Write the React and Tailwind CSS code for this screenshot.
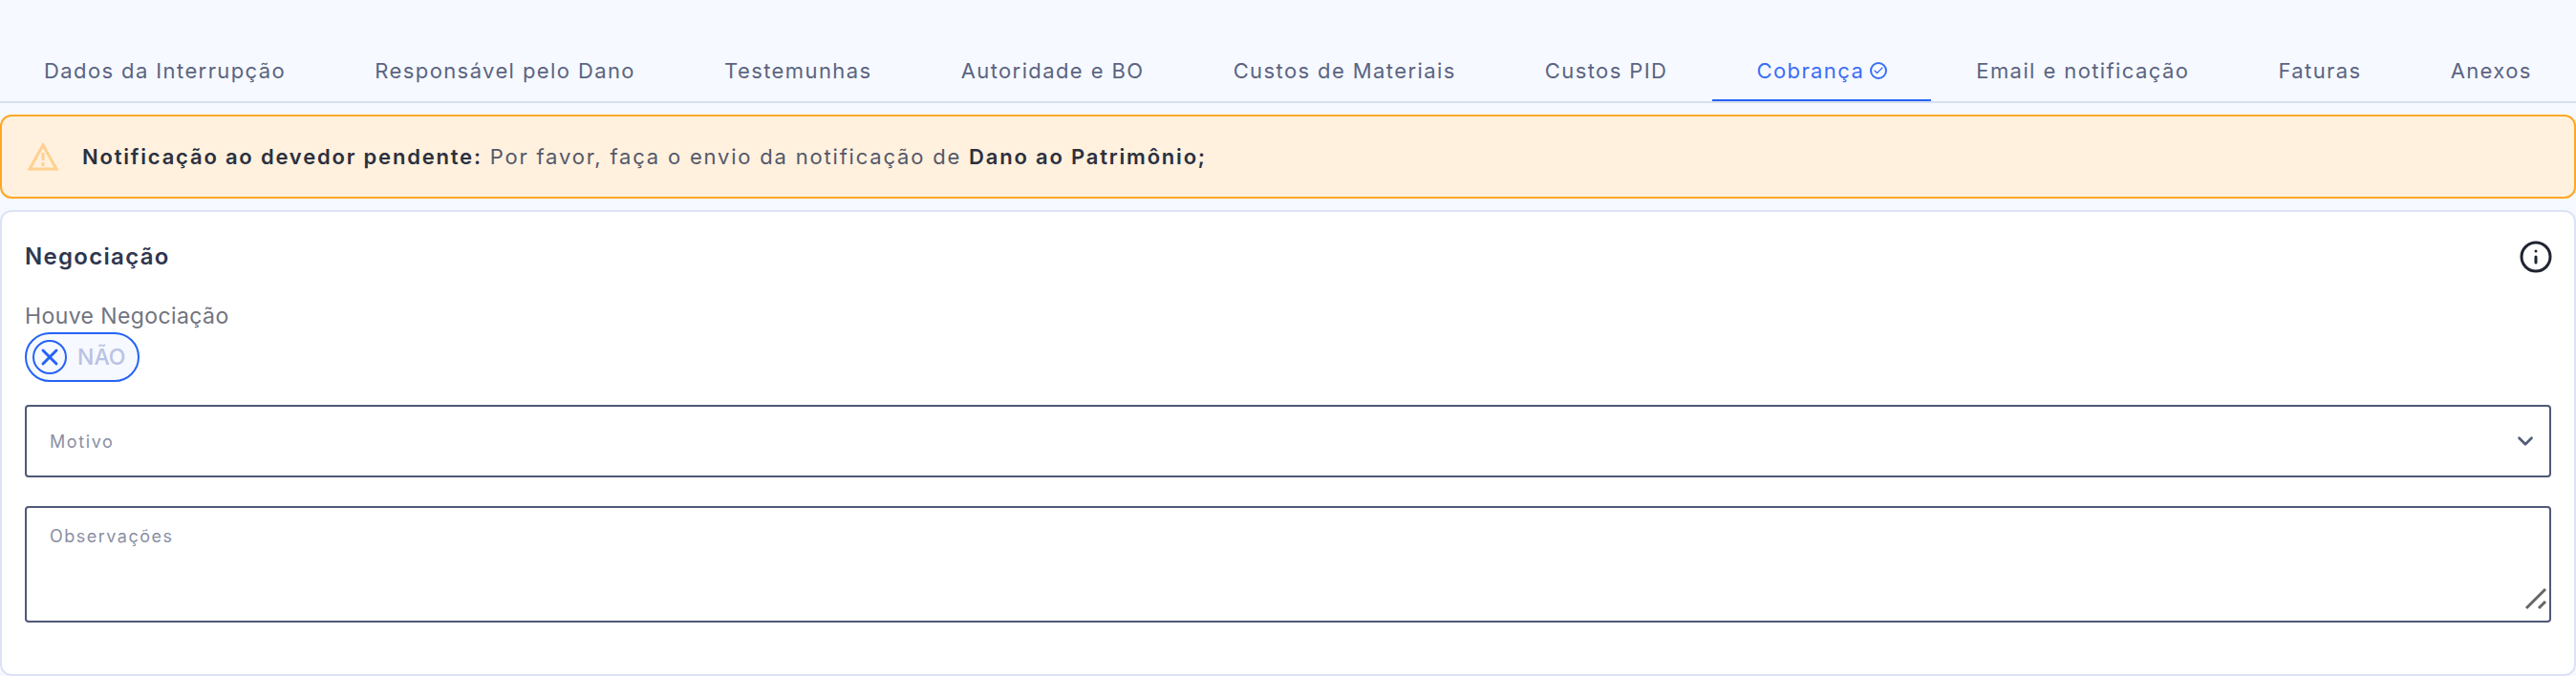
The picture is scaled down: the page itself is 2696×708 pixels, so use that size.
import React from "react";
import { Check, ChevronDown, Info, X } from "lucide-react";

const tabs = [
  "Dados da Interrupção",
  "Responsável pelo Dano",
  "Testemunhas",
  "Autoridade e BO",
  "Custos de Materiais",
  "Custos PID",
  "Cobrança",
  "Email e notificação",
  "Faturas",
  "Anexos",
];

function Tab({ label }) {
  const active = label === "Cobrança";
  return (
    <div
      className={
        "flex h-[50px] items-start gap-[6px] border-b-2 px-[46px] pt-[2px] text-[22px] leading-[32px] tracking-[1.4px] whitespace-nowrap " +
        (active ? "border-[#2563f5] text-[#3b6ef6]" : "border-transparent text-[#5b6482]")
      }
    >
      {label}
      {active && (
        <span className="mt-[7px] flex h-[18px] w-[18px] items-center justify-center rounded-full border-2 border-[#3b6ef6]">
          <Check size={12} strokeWidth={2.5} />
        </span>
      )}
    </div>
  );
}

export default function App() {
  return (
    <div className="h-[708px] overflow-hidden bg-[#f6f9ff] pt-[56px] font-['Inter',sans-serif]">
      {/* Tabs */}
      <div className="flex justify-between border-b-2 border-[#d9dff0]">
        {tabs.map((t) => (
          <Tab key={t} label={t} />
        ))}
      </div>

      {/* Alert */}
      <div className="mt-[12px] flex h-[88px] items-center rounded-[12px] border-2 border-[#ffa726] bg-[#fff1de] pl-[26px] text-[22px] tracking-[1.8px] text-[#55586a]">
        <svg width="34" height="30" viewBox="0 0 34 30" fill="none" stroke="#ffd08f" strokeWidth="3">
          <path d="M17 3 L31 28 H3 Z" />
          <path d="M17 11 V19 M17 21 V25" />
        </svg>
        <p className="ml-[24px]">
          <b className="font-semibold text-[#2b3040]">Notificação ao devedor pendente:</b> Por favor, faça o envio da
          notificação de <b className="font-semibold text-[#2b3040]">Dano ao Patrimônio;</b>
        </p>
      </div>

      {/* Card */}
      <div className="mt-[12px] h-[488px] rounded-[12px] border-2 border-[#dde3f5] bg-white px-[24px] pt-[28px]">
        <div className="flex h-[38px] items-center justify-between">
          <h2 className="text-[24px] leading-[36px] font-semibold tracking-[1.3px] text-[#2f3650]">Negociação</h2>
          <Info size={36} strokeWidth={2} className="mr-[-2px] text-[#1f2430]" />
        </div>

        <div className="mt-[28px] text-[23px] leading-[30px] tracking-[0.4px] text-[#70747f]">Houve Negociação</div>
        <div className="mt-[2px] flex h-[52px] w-[120px] items-center rounded-full border-2 border-[#2563f5] bg-[#f6f9ff] pl-[6px]">
          <span className="flex h-[36px] w-[36px] items-center justify-center rounded-full border-2 border-[#2563f5] text-[#2563f5]">
            <X size={28} strokeWidth={2.5} />
          </span>
          <span className="ml-[11px] text-[23px] font-medium text-[#b9c3e2]">NÃO</span>
        </div>

        <div className="mt-[24px] flex h-[76px] items-center justify-between rounded-[4px] border-2 border-[#4f5877] pr-[12px] pl-[24px]">
          <span className="text-[18px] tracking-[1.6px] text-[#8a8fa3]">Motivo</span>
          <ChevronDown size={26} strokeWidth={2.5} className="text-[#535c7a]" />
        </div>

        <div className="relative mt-[30px] h-[122px] rounded-[4px] border-2 border-[#4f5877] pt-[16px] pl-[24px]">
          <span className="text-[18px] tracking-[1.5px] text-[#8a8fa3]">Observações</span>
          {/* resize handle */}
          <svg className="absolute right-[2px] bottom-[11px]" width="24" height="24" viewBox="0 0 24 24">
            <path d="M2 22 L22 2 M15 22 L22 15" stroke="#666" strokeWidth="3" fill="none" />
          </svg>
        </div>
      </div>
    </div>
  );
}
